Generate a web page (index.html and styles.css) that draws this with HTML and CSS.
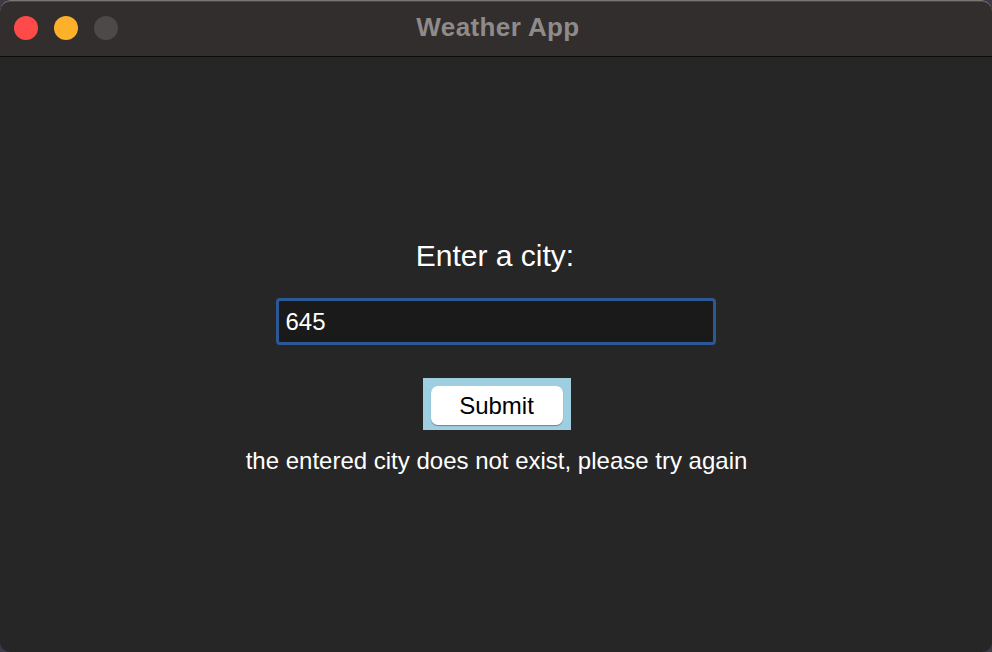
FILE: index.html
```html
<!DOCTYPE html>
<html lang="en">
<head>
<meta charset="utf-8">
<title>Weather App</title>
<link rel="stylesheet" href="styles.css">
</head>
<body>
<div class="window">
  <header class="titlebar">
    <div class="lights">
      <span class="light red"></span>
      <span class="light yellow"></span>
      <span class="light gray"></span>
    </div>
    <div class="title">Weather App</div>
  </header>
  <main class="content">
    <label class="prompt" for="city">Enter a city:</label>
    <input id="city" class="city-input" type="text" value="645">
    <div class="button-frame">
      <button class="submit" type="button">Submit</button>
    </div>
    <p class="error">the entered city does not exist, please try again</p>
  </main>
</div>
</body>
</html>
```

FILE: styles.css
```css
html, body {
  margin: 0;
  padding: 0;
}

body {
  width: 992px;
  height: 652px;
  background: #3a3a48;
  overflow: hidden;
  font-family: "Liberation Sans", Arial, sans-serif;
}

.window {
  width: 992px;
  height: 652px;
  border-radius: 10px;
  overflow: hidden;
  background: #262626;
  display: flex;
  flex-direction: column;
}

.titlebar {
  position: relative;
  height: 56px;
  flex: 0 0 56px;
  background: #322e2d;
  border-bottom: 1px solid #0c0c0c;
  box-shadow: inset 0 1px 0 #7a7573, inset 0 2px 0 #4a4644;
  border-radius: 10px 10px 0 0;
  display: flex;
  align-items: center;
  justify-content: center;
}

.lights {
  position: absolute;
  left: 14px;
  top: 16px;
  display: flex;
  gap: 16px;
}

.light {
  width: 24px;
  height: 24px;
  border-radius: 50%;
  display: block;
}

.red { background: #fe4a49; }
.yellow { background: #fdb02a; }
.gray { background: #4d4948; }

.title {
  font-weight: bold;
  font-size: 26px;
  color: #8f8b8a;
  margin-left: 4px;
  margin-top: -1px;
  letter-spacing: 0.4px;
}

.content {
  flex: 1;
  display: flex;
  flex-direction: column;
  align-items: center;
  padding-top: 181px;
  color: #ffffff;
}

.prompt {
  font-size: 30px;
  line-height: 36px;
  margin-right: 2px;
}

.city-input {
  box-sizing: border-box;
  margin-top: 24px;
  width: 440px;
  height: 47px;
  border: 3px solid #2c5896;
  border-radius: 4px;
  background: #1a1a1a;
  color: #ffffff;
  font-family: "Liberation Sans", Arial, sans-serif;
  font-size: 24px;
  padding: 0 7px;
  outline: none;
  margin-right: 1px;
}

.button-frame {
  margin-top: 33px;
  background: #9dcfe0;
  padding: 8px 8px 5px 8px;
  display: flex;
  margin-left: 1px;
}

.submit {
  width: 132px;
  height: 39px;
  background: #ffffff;
  border: none;
  border-radius: 7px;
  box-shadow: 0 1px 1px rgba(0, 0, 0, 0.35);
  font-family: "Liberation Sans", Arial, sans-serif;
  font-size: 24px;
  color: #000000;
  padding: 0;
}

.error {
  margin: 17px 0 0 0;
  font-size: 24px;
  line-height: 28px;
  margin-left: 1px;
}
```
